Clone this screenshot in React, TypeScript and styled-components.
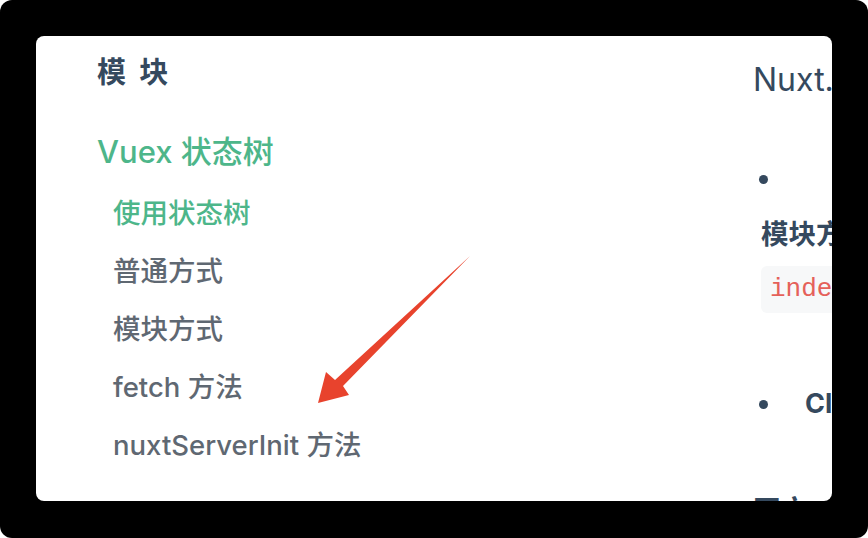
import React from "react";
import styled, { createGlobalStyle } from "styled-components";

const Global = createGlobalStyle`
  html, body { margin: 0; padding: 0; background: #ffffff; }
  #root { width: 868px; height: 538px; }
`;

const FONT = `Inter, "Noto Sans CJK SC", sans-serif`;

const Frame = styled.div`
  width: 868px;
  height: 538px;
  background: #000;
  border-radius: 12px;
  padding: 36px 36px 37px 36px;
  box-sizing: border-box;
`;

const Card = styled.div`
  position: relative;
  width: 796px;
  height: 465px;
  background: #fff;
  border-radius: 8px;
  overflow: hidden;
  display: flex;
  font-family: ${FONT};
`;

const Sidebar = styled.nav`
  width: 717px;
  flex: none;
  box-sizing: border-box;
  padding: 17px 0 0 61px;
  display: flex;
  flex-direction: column;
`;

const SectionTitle = styled.div`
  font-size: 29px;
  line-height: 40px;
  font-weight: 600;
  color: #35495e;
  word-spacing: 6px;
`;

const GroupTitle = styled.div`
  margin-top: 39px;
  font-size: 31px;
  line-height: 40px;
  font-weight: 500;
  color: #4db68a;
`;

const SubList = styled.ul`
  list-style: none;
  margin: 22px 0 0 0;
  padding: 0 0 0 16px;
  display: flex;
  flex-direction: column;
  gap: 20px;
`;

const SubItem = styled.li<{ $active?: boolean }>`
  font-size: 27.5px;
  line-height: 38px;
  font-weight: 500;
  color: ${(p) => (p.$active ? "#4db68a" : "#5f6872")};
`;

const Content = styled.main`
  flex: 1;
  display: flex;
  flex-direction: column;
  padding-top: 22px;
  color: #35495e;
  white-space: nowrap;
  & > * {
    flex: none;
  }
`;

const PageTitle = styled.div`
  font-size: 32px;
  line-height: 44px;
  font-weight: 400;
  color: #35495e;
`;

const Bullet = styled.div<{ $top: number }>`
  margin-top: ${(p) => p.$top}px;
  display: flex;
  align-items: center;
  height: 38px;
  padding-left: 6px;
  &::before {
    content: "";
    width: 9px;
    height: 9px;
    border-radius: 50%;
    background: #35495e;
    flex: none;
  }
`;

const BulletText = styled.span`
  margin-left: 37px;
  font-size: 27px;
  line-height: 38px;
  font-weight: 700;
  color: #35495e;
`;

const Block = styled.div`
  margin-top: 17px;
  padding-left: 8px;
  display: flex;
  flex-direction: column;
`;

const SubHeading = styled.div`
  font-size: 27.5px;
  line-height: 38px;
  font-weight: 700;
  color: #35495e;
`;

const Code = styled.code`
  margin-top: 13px;
  display: block;
  background: #f7f8f9;
  border-radius: 6px;
  padding: 4px 9px;
  height: 47px;
  box-sizing: border-box;
  font-family: "Liberation Mono", "DejaVu Sans Mono", monospace;
  font-size: 26px;
  line-height: 39px;
  color: #e5615a;
`;

const Clipped = styled.div`
  margin-top: 68px;
  font-size: 27.5px;
  line-height: 38px;
  font-weight: 700;
  color: #35495e;
`;

const ArrowSvg = styled.svg`
  position: absolute;
  left: 0;
  top: 0;
  pointer-events: none;
`;

export default function App() {
  return (
    <>
      <Global />
      <Frame>
        <Card>
          <Sidebar>
            <SectionTitle>模 块</SectionTitle>
            <GroupTitle>Vuex 状态树</GroupTitle>
            <SubList>
              <SubItem $active>使用状态树</SubItem>
              <SubItem>普通方式</SubItem>
              <SubItem>模块方式</SubItem>
              <SubItem>fetch 方法</SubItem>
              <SubItem>nuxtServerInit 方法</SubItem>
            </SubList>
          </Sidebar>
          <Content>
            <PageTitle>Nuxt.</PageTitle>
            <Bullet $top={58} />
            <Block>
              <SubHeading>模块方</SubHeading>
              <Code>inde</Code>
            </Block>
            <Bullet $top={72}>
              <BulletText>Cl</BulletText>
            </Bullet>
            <Clipped>正文</Clipped>
          </Content>
          <ArrowSvg width="796" height="465" viewBox="36 36 796 465">
            <polygon
              points="470,256 343,386 349,395 318,403 326,372 335,380"
              fill="#e8432d"
            />
          </ArrowSvg>
        </Card>
      </Frame>
    </>
  );
}
